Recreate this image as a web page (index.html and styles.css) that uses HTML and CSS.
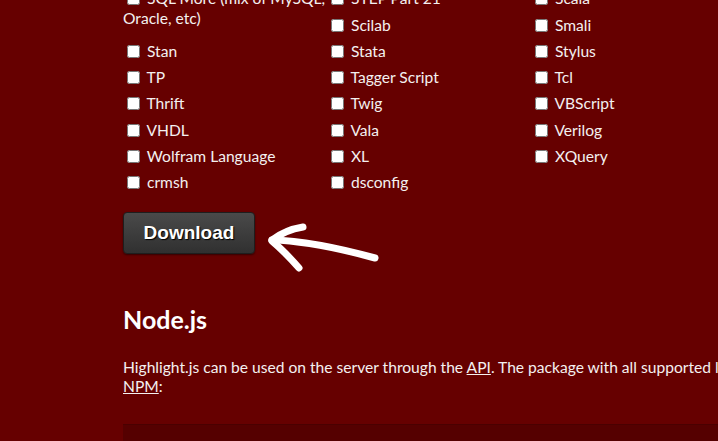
FILE: index.html
```html
<!DOCTYPE html>
<html lang="en">
<head>
<meta charset="utf-8">
<title>Download</title>
<link rel="stylesheet" href="styles.css">
</head>
<body>
<main class="page">
  <ul class="langs">
    <li class="tall"><label><input type="checkbox"> SQL More (mix of MySQL, Oracle, etc)</label></li>
    <li><label><input type="checkbox"> STEP Part 21</label></li>
    <li><label><input type="checkbox"> Scala</label></li>
    <li><label><input type="checkbox"> Scilab</label></li>
    <li><label><input type="checkbox"> Smali</label></li>
    <li><label><input type="checkbox"> Stan</label></li>
    <li><label><input type="checkbox"> Stata</label></li>
    <li><label><input type="checkbox"> Stylus</label></li>
    <li><label><input type="checkbox"> TP</label></li>
    <li><label><input type="checkbox"> Tagger Script</label></li>
    <li><label><input type="checkbox"> Tcl</label></li>
    <li><label><input type="checkbox"> Thrift</label></li>
    <li><label><input type="checkbox"> Twig</label></li>
    <li><label><input type="checkbox"> VBScript</label></li>
    <li><label><input type="checkbox"> VHDL</label></li>
    <li><label><input type="checkbox"> Vala</label></li>
    <li><label><input type="checkbox"> Verilog</label></li>
    <li><label><input type="checkbox"> Wolfram Language</label></li>
    <li><label><input type="checkbox"> XL</label></li>
    <li><label><input type="checkbox"> XQuery</label></li>
    <li><label><input type="checkbox"> crmsh</label></li>
    <li><label><input type="checkbox"> dsconfig</label></li>
  </ul>

  <div class="actions">
    <button class="download" type="button">Download</button>
    <svg class="arrow" width="116" height="54" viewBox="0 0 116 54" aria-hidden="true">
      <g fill="none" stroke="#fff" stroke-width="7" stroke-linecap="round" stroke-linejoin="round">
        <path d="M7 20 Q48 21 110 38"/>
        <path d="M7 20 Q20 10 38 7"/>
        <path d="M7 21 Q19 31 34 48"/>
      </g>
    </svg>
  </div>

  <h2 class="title">Node.js</h2>
  <p class="text">Highlight.js can be used on the server through the <a href="#">API</a>. The package with all supported languages is installed from <a href="#">NPM</a>:</p>
  <pre class="code"></pre>
</main>
</body>
</html>
```

FILE: styles.css
```css
html, body {
  margin: 0;
  padding: 0;
  overflow: hidden;
}
body {
  background: #660000;
  color: #f4f0f0;
  font-family: Lato, "Noto Sans", sans-serif;
  font-size: 15.6px;
  width: 718px;
  height: 441px;
}
.page {
  margin-top: -13.75px;
  padding-left: 123px;
  width: 820px;
}
.langs {
  list-style: none;
  margin: 0;
  padding: 0;
  display: grid;
  grid-template-columns: 204px 204px 204px;
  grid-auto-rows: 26.3px;
}
.langs li {
  padding-top: 3px;
  line-height: 19.5px;
}
.langs li.tall {
  grid-row: span 2;
}
.langs input {
  margin: 0 3px 0 4px;
  width: 13px;
  height: 13px;
  vertical-align: -1px;
}
.actions {
  display: flex;
  align-items: flex-start;
  margin-top: 15.35px;
}
.download {
  width: 132px;
  height: 42px;
  border: 1px solid #1e1e1e;
  border-radius: 4px;
  background: linear-gradient(#4a4a4a, #303030);
  box-shadow: 0 1px 2px rgba(0,0,0,0.5);
  color: #fff;
  font-family: "Liberation Sans", Arial, sans-serif;
  font-weight: bold;
  font-size: 19px;
  text-shadow: 1px 1px 1px #000;
  padding: 0;
}
.arrow {
  margin-left: 10px;
  margin-top: 8px;
}
.title {
  margin: 30px 0 0;
  font-size: 25px;
  line-height: 30px;
  font-weight: bold;
  color: #fff;
}
.text {
  margin: 24px 0 0;
  line-height: 19.5px;
  width: 800px;
}
.text a {
  color: inherit;
  text-decoration: underline;
}
.code {
  margin: 27px 0 0;
  height: 80px;
  background: #550000;
  border-top: 1px solid #4a0000;
}
```
